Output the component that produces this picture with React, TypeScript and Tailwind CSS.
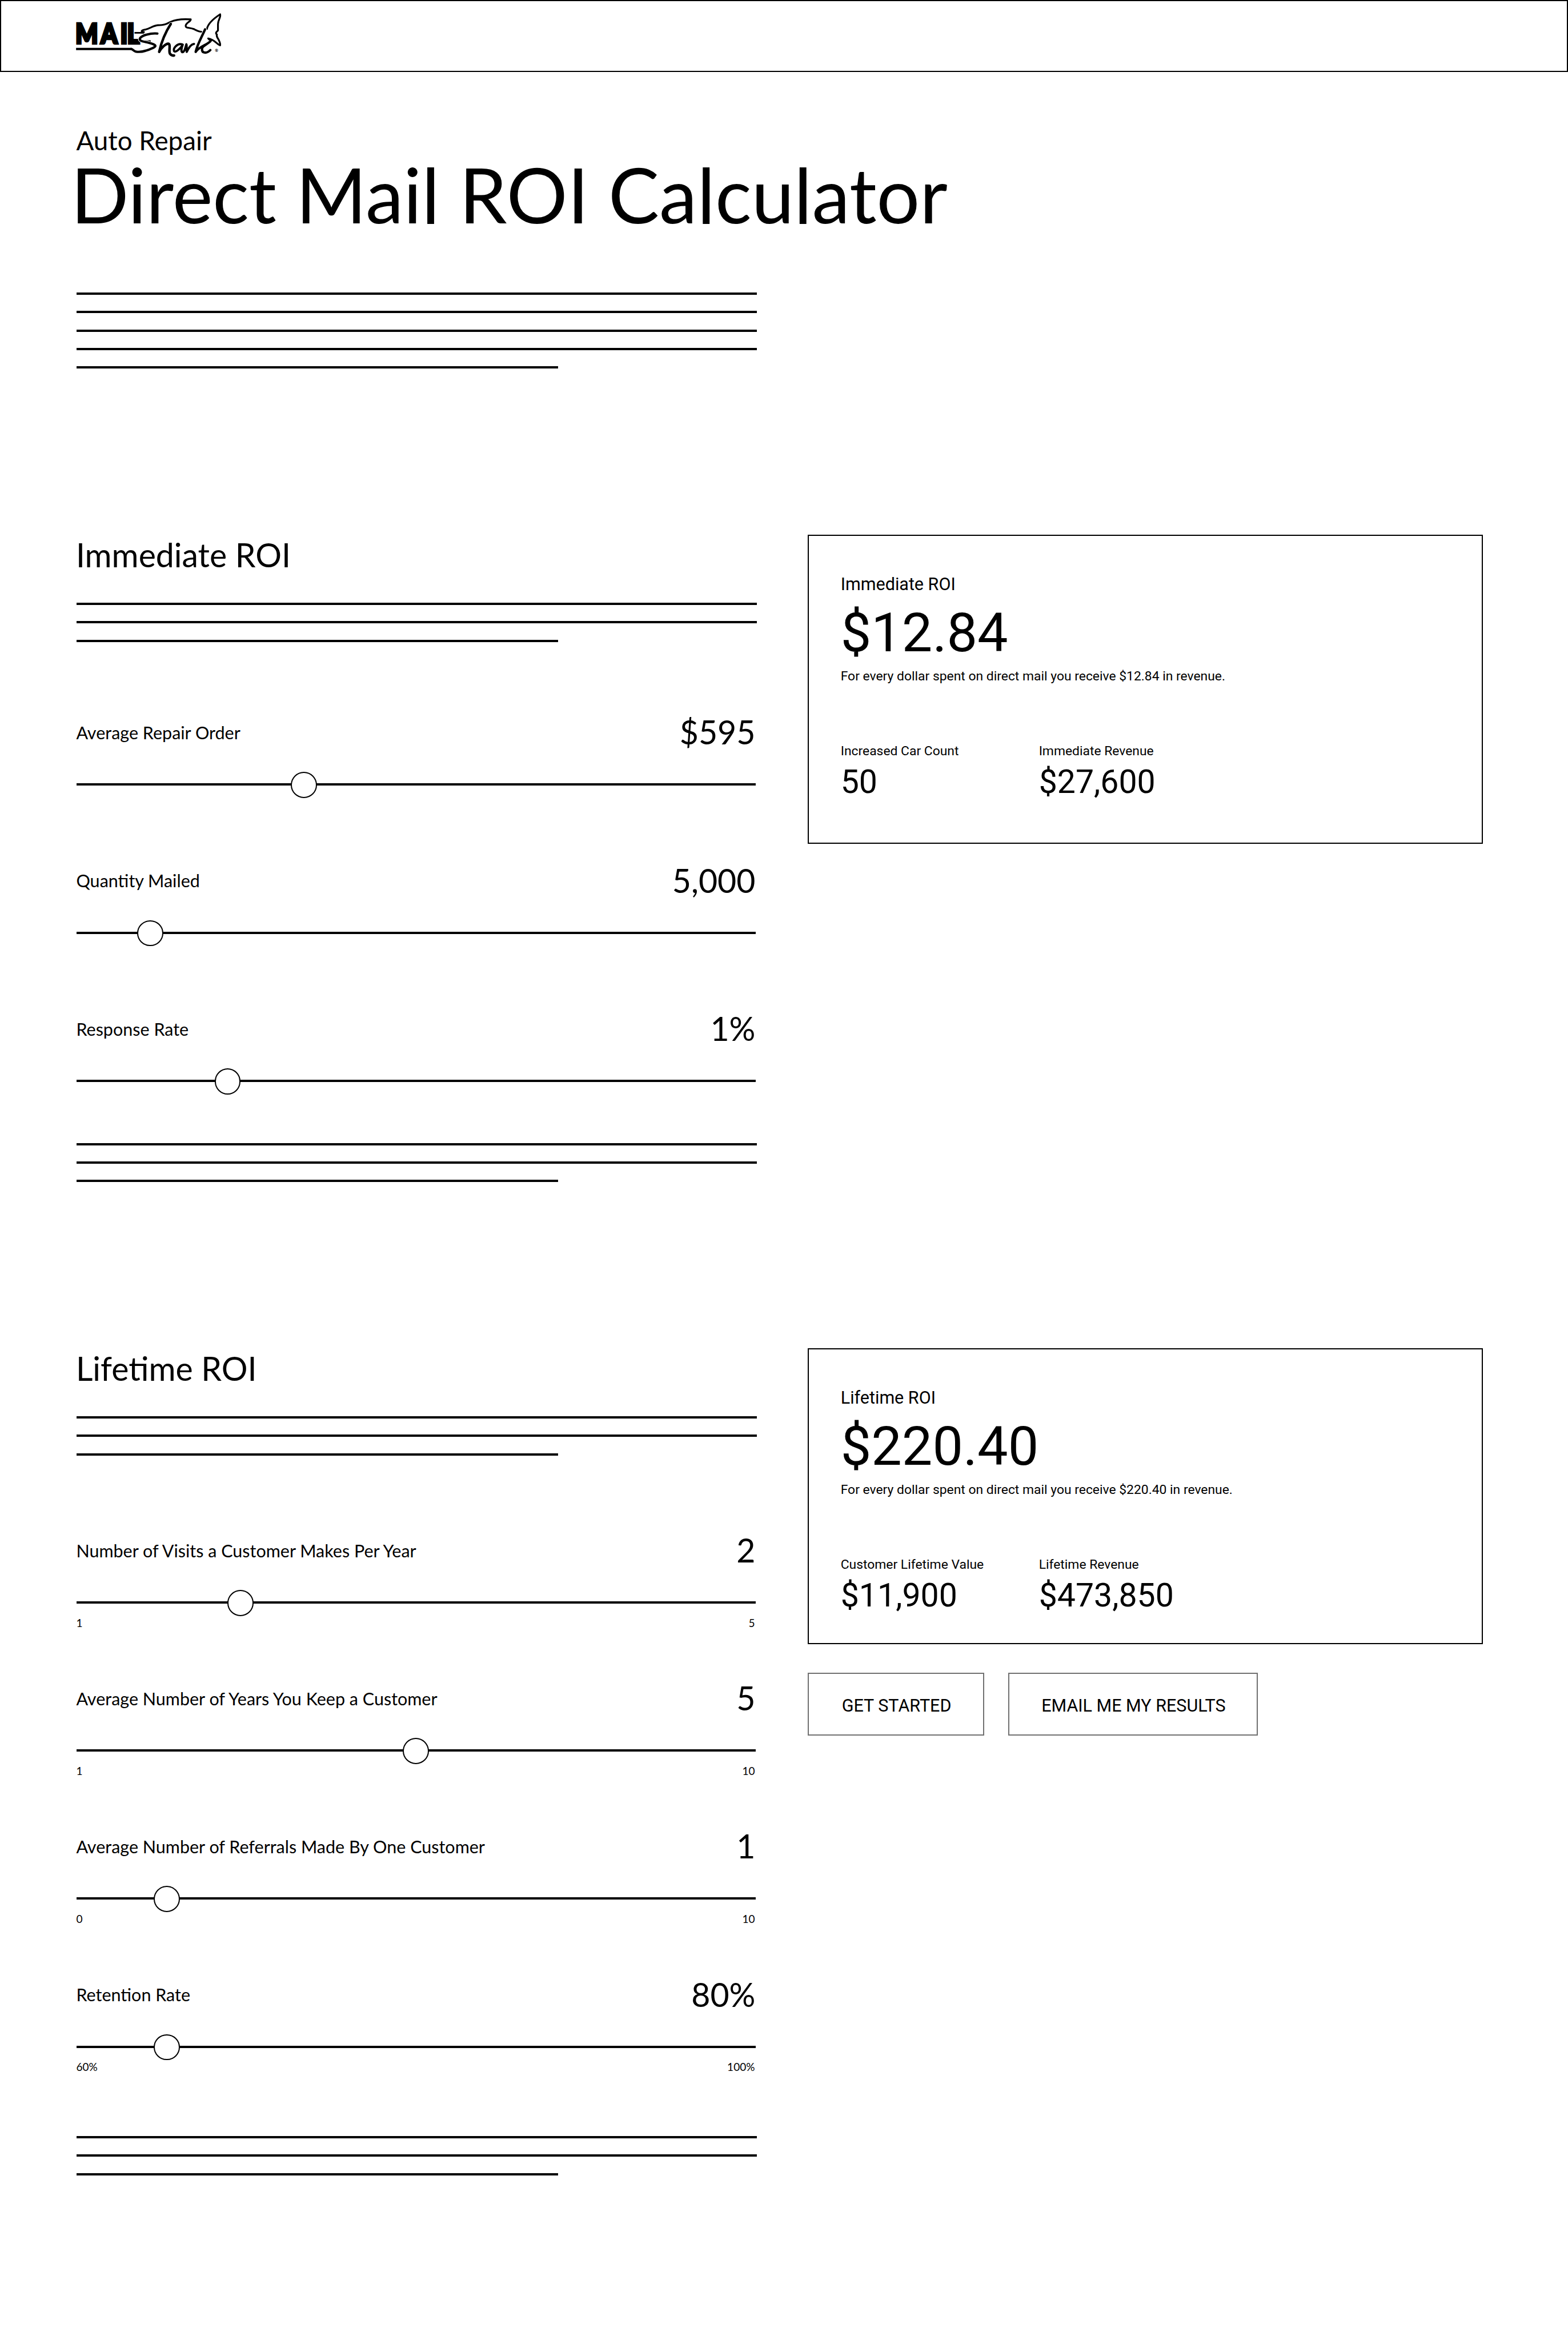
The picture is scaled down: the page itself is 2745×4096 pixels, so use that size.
type SliderProps = {
  label: string;
  value: string;
  offset: number;
  min?: string;
  max?: string;
};

function Logo() {
  return (
    <svg viewBox="50 60 820 260" className="block h-[82.6px] w-[260.5px]" fill="none" stroke="#000" strokeLinecap="round" strokeLinejoin="round">
      <text transform="scale(.87 1)" x="65.5 226 349.5 392.8" y="238.5" fill="#000" stroke="#000" strokeWidth="14" strokeLinejoin="miter" fontFamily="Lato, sans-serif" fontWeight="900" fontSize="149">
        MAIL
      </text>
      <path d="M60 270H366" strokeWidth="13" strokeLinecap="butt" />
      <path d="M382 181H434" strokeWidth="9" strokeLinecap="butt" />
      <path d="M440 226H471" strokeWidth="8" strokeLinecap="butt" />
      <path d="M508 185C468 182 426 194 413 210C404 228 432 228 462 236" stroke="#fff" strokeWidth="19" />
      <path d="M508 185C468 182 426 194 413 210C404 228 432 228 462 236C500 246 506 254 484 264C450 280 412 290 388 284C376 281 374 272 364 270" strokeWidth="13" />
      <path d="M434 177C418 178 416 168 436 164C466 160 480 142 510 139C545 138 556 134 580 121C610 107 652 104 692 107C690 122 664 124 664 144C664 156 690 152 708 160C724 168 734 174 750 175" strokeWidth="10" />
      <path d="M582 132C556 172 530 232 518 286" stroke="#fff" strokeWidth="19" />
      <path d="M582 132C556 172 530 232 518 286C530 262 556 240 568 241C584 244 568 284 578 297C586 306 592 308 600 306" strokeWidth="14" />
      <path d="M646 245C618 236 594 266 600 282C610 292 638 264 648 246C640 266 638 284 646 288C658 288 662 262 668 244C672 254 666 274 670 286C678 268 690 244 710 242" strokeWidth="12" />
      <path d="M781 160C786 132 822 100 854 79C858 100 842 108 842 134V168C838 174 828 178 832 186L836 190C832 200 838 206 844 216C850 228 856 238 854 250C838 246 824 218 788 212C794 220 800 222 804 224" strokeWidth="10" />
      <path d="M771 162C752 206 730 240 719 286C738 256 774 240 796 232" stroke="#fff" strokeWidth="18" />
      <path d="M771 162C752 206 730 240 719 286C738 256 780 248 800 228C784 244 756 252 754 268C752 296 780 296 800 276" strokeWidth="13" />
      <text x="834" y="287" textAnchor="middle" fill="#000" stroke="none" fontFamily="Lato, sans-serif" fontWeight="700" fontSize="22">®</text>
    </svg>
  );
}

/** Placeholder paragraph: full-width rules ending with a shorter one. */
function TextLines({ count }: { count: number }) {
  return (
    <div className="flex flex-col">
      {Array.from({ length: count }, (_, i) => (
        <div key={i} className="h-34">
          <div className={i === count - 1 ? "h-[4px] w-884 bg-black" : "h-[4px] w-1249 bg-black"} />
        </div>
      ))}
    </div>
  );
}

function Slider({ label, value, offset, min, max }: SliderProps) {
  return (
    <div className="w-1247">
      <div className="-ml-1 flex h-72 items-start justify-between pr-0.5">
        <span className="pt-1.75 text-[30.5px] leading-72">{label}</span>
        <span className="pt-1 text-[57.19px] leading-72">{value}</span>
      </div>
      <div className="relative mt-38.25 h-48 pt-21">
        <div className="h-[4px] bg-black" />
        <div
          className="absolute top-0 size-48 rounded-full border-2 border-black bg-white"
          style={{ left: `${(offset / 1247) * 100}%` }}
        />
      </div>
      {min && (
        <div className="-ml-1 flex justify-between pt-1 pr-1.5 text-[19.06px] leading-24">
          <span>{min}</span>
          <span>{max}</span>
        </div>
      )}
    </div>
  );
}

function Stat({ label, value }: { label: string; value: string }) {
  return (
    <div className="w-364">
      <div className="text-[22.875px] leading-32">{label}</div>
      <div className="mt-9.75 text-[57.19px] leading-60">{value}</div>
    </div>
  );
}

type CardProps = {
  title: string;
  amount: string;
  stats: { label: string; value: string }[];
};

function ResultBody({ title, amount, stats }: CardProps) {
  return (
    <>
      <div className="text-[30.5px] leading-40">{title}</div>
      <div className="mt-18.75 text-[95.31px] leading-100">{amount}</div>
      <div className="mt-15 text-[22.875px] leading-32">
        For every dollar spent on direct mail you receive {amount} in revenue.
      </div>
      <div className="mt-105 flex">
        {stats.map((s) => (
          <Stat key={s.label} {...s} />
        ))}
      </div>
    </>
  );
}

export default function App() {
  return (
    <div className="h-[4096px] w-[2745px] overflow-hidden bg-white font-[Lato,sans-serif] text-black [--spacing:0.953125px]">
      <header className="h-132 border-2 border-black pt-18 pl-134.5">
        <Logo />
      </header>
      <main className="pt-97.5 pl-141">
        <div className="-ml-1 text-[45.75px] leading-56">Auto Repair</div>
        <h1 className="-ml-11 pt-0.75 text-[133.44px] leading-140">Direct Mail ROI Calculator</h1>
        <div className="mt-110.75">
          <TextLines count={5} />
        </div>

        <section className="mt-275 flex gap-94">
          <div className="w-1249 pt-0.75">
            <h2 className="-ml-1.5 text-[57.19px] leading-72">Immediate ROI</h2>
            <div className="mt-52.25">
              <TextLines count={3} />
            </div>
            <div className="mt-98.75 flex flex-col gap-113.75">
              <Slider label="Average Repair Order" value="$595" offset={393} />
              <Slider label="Quantity Mailed" value="5,000" offset={111} />
              <Slider label="Response Rate" value="1%" offset={253} />
            </div>
            <div className="mt-89">
              <TextLines count={3} />
            </div>
          </div>
          <div className="w-1240 font-[Roboto,sans-serif]">
            <div className="h-568 border-2 border-black pt-69 pl-58">
              <ResultBody
                title="Immediate ROI"
                amount="$12.84"
                stats={[
                  { label: "Increased Car Count", value: "50" },
                  { label: "Immediate Revenue", value: "$27,600" },
                ]}
              />
            </div>
          </div>
        </section>

        <section className="mt-275 flex gap-94">
          <div className="w-1249 pt-0.75">
            <h2 className="-ml-1.5 text-[57.19px] leading-72">Lifetime ROI</h2>
            <div className="mt-52.25">
              <TextLines count={3} />
            </div>
            <div className="mt-106.75 flex flex-col gap-88.75">
              <Slider label="Number of Visits a Customer Makes Per Year" value="2" offset={277} min="1" max="5" />
              <Slider label="Average Number of Years You Keep a Customer" value="5" offset={599} min="1" max="10" />
              <Slider label="Average Number of Referrals Made By One Customer" value="1" offset={141} min="0" max="10" />
              <Slider label="Retention Rate" value="80%" offset={141} min="60%" max="100%" />
            </div>
            <div className="mt-114">
              <TextLines count={3} />
            </div>
          </div>
          <div className="w-1240 font-[Roboto,sans-serif]">
            <div className="h-544 border-2 border-black pt-69 pl-58">
              <ResultBody
                title="Lifetime ROI"
                amount="$220.40"
                stats={[
                  { label: "Customer Lifetime Value", value: "$11,900" },
                  { label: "Lifetime Revenue", value: "$473,850" },
                ]}
              />
            </div>
            <div className="mt-52 flex gap-44 text-[30.5px]">
              <button className="h-116 w-324 border-2 border-[#707070] pt-6 pl-1.5">GET STARTED</button>
              <button className="h-116 w-458 border-2 border-[#707070] pt-6 pl-2">EMAIL ME MY RESULTS</button>
            </div>
          </div>
        </section>
      </main>
    </div>
  );
}
